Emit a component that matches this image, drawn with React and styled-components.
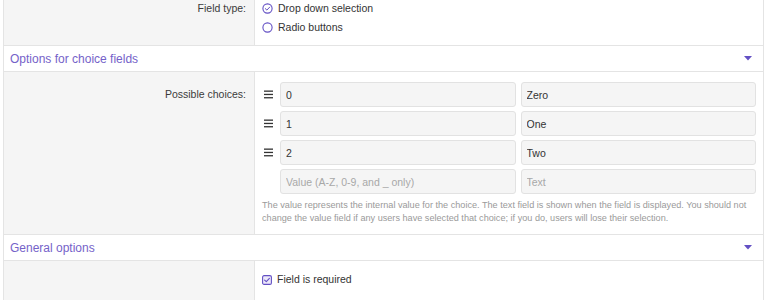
import React from "react";
import styled, { createGlobalStyle } from "styled-components";

const Global = createGlobalStyle`
  html, body { margin: 0; padding: 0; background: #fff; }
  body { font-family: "Liberation Sans", Arial, sans-serif; color: #3a3a3a; }
`;

const Frame = styled.div`
  margin-left: 3px;
  width: 759px;
  border-left: 1px solid #e4e4e4;
  border-right: 1px solid #e4e4e4;
  height: 300px;
  overflow: hidden;
`;

const Row = styled.div`
  display: grid;
  grid-template-columns: 250px 1fr;
  border-bottom: 1px solid #e4e4e4;
`;

const Label = styled.div`
  background: #f5f5f5;
  text-align: right;
  padding: ${(p) => p.$pt || 0}px 8px 0 0;
  font-size: 10.5px;
  line-height: 13px;
  color: #3b3b3b;
`;

const Cell = styled.div`
  border-left: 1px solid #e4e4e4;
  padding: ${(p) => p.$pad};
`;

const OptionList = styled.div`
  display: flex;
  flex-direction: column;
  gap: 6px;
`;

const Option = styled.label`
  display: flex;
  align-items: center;
  gap: 5px;
  font-size: 10.5px;
  line-height: 13px;
  color: #333;
`;

const Header = styled.div`
  display: flex;
  align-items: center;
  justify-content: space-between;
  height: 25px;
  padding: 0 11px 0 6px;
  background: #fff;
  border-bottom: 1px solid #e4e4e4;
  font-size: 12px;
  color: #7562c9;
`;

const ChoiceGrid = styled.div`
  display: flex;
  flex-direction: column;
  gap: 4px;
`;

const ChoiceRow = styled.div`
  display: flex;
  align-items: center;
`;

const Handle = styled.div`
  width: 18px;
  flex: none;
  display: flex;
  align-items: center;
  padding-left: 2px;
  box-sizing: border-box;
`;

const Inputs = styled.div`
  flex: 1;
  display: flex;
  gap: 5px;
`;

const Input = styled.input`
  flex: 1;
  min-width: 0;
  height: 25px;
  box-sizing: border-box;
  border: 1px solid #e2e2e2;
  border-radius: 3px;
  background: #f5f5f5;
  padding: 0 5px;
  font-family: inherit;
  font-size: 10.5px;
  color: #333;
  outline: none;
  &::placeholder { color: #a8a8a8; }
`;

const Help = styled.div`
  margin-top: 5px;
  font-size: 9.15px;
  line-height: 13px;
  color: #9a9a9a;
`;

const Purple = "#6350c4";

const RadioIcon = ({ checked }) => (
  <svg width="11" height="11" viewBox="0 0 11 11">
    <circle cx="5.5" cy="5.5" r="4.6" fill="none" stroke={Purple} strokeWidth="1.1" />
    {checked && (
      <path d="M3.3 5.6 L4.9 7.1 L7.7 4.1" fill="none" stroke={Purple} strokeWidth="1" strokeLinecap="round" strokeLinejoin="round" />
    )}
  </svg>
);

const CheckIcon = () => (
  <svg width="10" height="10" viewBox="0 0 10 10">
    <rect x="0.6" y="0.6" width="8.8" height="8.8" rx="1.5" fill="#ece8fa" stroke={Purple} strokeWidth="1.1" />
    <path d="M2.6 5.1 L4.3 6.7 L7.4 3.3" fill="none" stroke={Purple} strokeWidth="1.1" strokeLinecap="round" strokeLinejoin="round" />
  </svg>
);

const DragIcon = () => (
  <svg width="10" height="9" viewBox="0 0 10 9">
    <rect x="0" y="0.5" width="9" height="1.3" fill="#333" />
    <rect x="0" y="3.8" width="9" height="1.3" fill="#333" />
    <rect x="0" y="7.1" width="9" height="1.3" fill="#333" />
  </svg>
);

const Caret = () => (
  <svg width="8" height="5" viewBox="0 0 8 5">
    <path d="M0 0 H8 L4 4.5 Z" fill={Purple} />
  </svg>
);

const choices = [
  ["0", "Zero"],
  ["1", "One"],
  ["2", "Two"],
];

export default function App() {
  return (
    <>
      <Global />
      <Frame>
        <Row>
          <Label $pt={2}>Field type:</Label>
          <Cell $pad="2px 8px 11px 7px">
            <OptionList>
              <Option>
                <RadioIcon checked />
                Drop down selection
              </Option>
              <Option>
                <RadioIcon />
                Radio buttons
              </Option>
            </OptionList>
          </Cell>
        </Row>
        <Header>
          <span>Options for choice fields</span>
          <Caret />
        </Header>
        <Row>
          <Label $pt={16}>Possible choices:</Label>
          <Cell $pad="10px 7px 9px 7px">
            <ChoiceGrid>
              {choices.map(([v, t]) => (
                <ChoiceRow key={v}>
                  <Handle>
                    <DragIcon />
                  </Handle>
                  <Inputs>
                    <Input defaultValue={v} />
                    <Input defaultValue={t} />
                  </Inputs>
                </ChoiceRow>
              ))}
              <ChoiceRow>
                <Handle />
                <Inputs>
                  <Input placeholder="Value (A-Z, 0-9, and _ only)" />
                  <Input placeholder="Text" />
                </Inputs>
              </ChoiceRow>
            </ChoiceGrid>
            <Help>
              The value represents the internal value for the choice. The text field is shown when the field is displayed. You should not
              change the value field if any users have selected that choice; if you do, users will lose their selection.
            </Help>
          </Cell>
        </Row>
        <Header>
          <span>General options</span>
          <Caret />
        </Header>
        <Row>
          <Label />
          <Cell $pad="12px 8px 20px 7px">
            <Option>
              <CheckIcon />
              Field is required
            </Option>
          </Cell>
        </Row>
      </Frame>
    </>
  );
}
